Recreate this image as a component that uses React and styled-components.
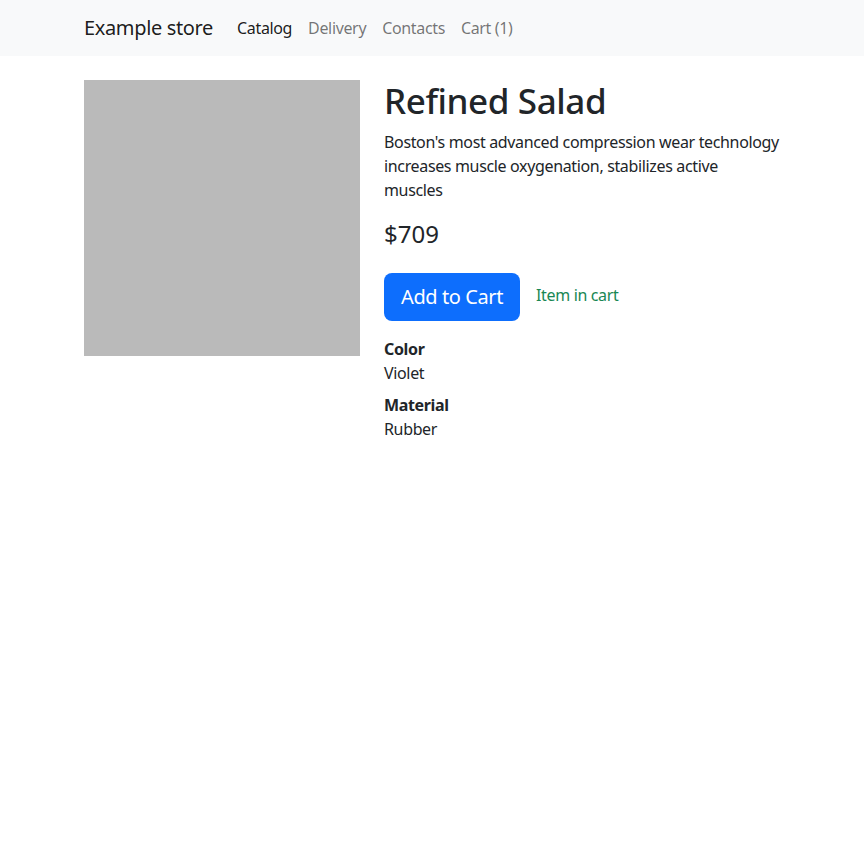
import styled, { createGlobalStyle } from "styled-components";

const GlobalStyle = createGlobalStyle`
	* {
		box-sizing: border-box;
	}

	body {
		margin: 0;
		font-family: "Noto Sans", "Open Sans", sans-serif;
		font-size: 16px;
		line-height: 1.5;
		letter-spacing: -0.35px;
		color: #212529;
		background: #ffffff;
	}
`;

const links = [
	{ label: "Catalog", active: true },
	{ label: "Delivery" },
	{ label: "Contacts" },
	{ label: "Cart (1)" },
];

const specs = [
	{ name: "Color", value: "Violet" },
	{ name: "Material", value: "Rubber" },
];

export default function App() {
	return (
		<>
			<GlobalStyle />
			<Navbar>
				<Container>
					<Brand href="#">Example store</Brand>
					<NavList>
						{links.map((link) => (
							<NavLink key={link.label} href="#" $active={link.active}>
								{link.label}
							</NavLink>
						))}
					</NavList>
				</Container>
			</Navbar>
			<Main>
				<Product>
					<Picture />
					<Details>
						<Title>Refined Salad</Title>
						<Description>
							Boston's most advanced compression wear technology increases
							muscle oxygenation, stabilizes active muscles
						</Description>
						<Price>$709</Price>
						<Actions>
							<CartButton type="button">Add to Cart</CartButton>
							<InCart>Item in cart</InCart>
						</Actions>
						<Specs>
							{specs.map((spec) => (
								<div key={spec.name}>
									<SpecName>{spec.name}</SpecName>
									<SpecValue>{spec.value}</SpecValue>
								</div>
							))}
						</Specs>
					</Details>
				</Product>
			</Main>
		</>
	);
}

const Navbar = styled.nav`
	background: #f8f9fa;
	padding: 8px 0;
`;

const Container = styled.div`
	width: 720px;
	margin: 0 auto;
	padding: 0 12px;
	display: flex;
	align-items: center;
`;

const Brand = styled.a`
	font-size: 20px;
	line-height: 30px;
	padding: 5px 0;
	margin-right: 16px;
	color: rgba(0, 0, 0, 0.9);
	text-decoration: none;
`;

const NavList = styled.div`
	display: flex;
`;

const NavLink = styled.a`
	padding: 8px;
	font-size: 16px;
	line-height: 24px;
	text-decoration: none;
	color: ${({ $active }) => ($active ? "rgba(0, 0, 0, 0.9)" : "rgba(0, 0, 0, 0.55)")};
`;

const Main = styled(Container)`
	margin-top: 24px;
	display: block;
`;

const Product = styled.div`
	display: flex;
	gap: 24px;
	align-items: flex-start;
`;

const Picture = styled.div`
	flex: 0 0 276px;
	height: 276px;
	background: #bababa;
`;

const Details = styled.div`
	flex: 1;
	min-width: 0;
`;

const Title = styled.h1`
	margin: 0 0 8px;
	font-size: 35px;
	font-weight: 500;
	line-height: 1.2;
	letter-spacing: -0.4px;
`;

const Description = styled.p`
	margin: 0 0 16px;
`;

const Price = styled.div`
	font-size: 24px;
	line-height: 31px;
	margin-bottom: 24px;
	letter-spacing: 0;
`;

const Actions = styled.div`
	display: flex;
	align-items: center;
	gap: 16px;
	margin-bottom: 16px;
`;

const CartButton = styled.button`
	font-family: inherit;
	letter-spacing: -0.4px;
	font-size: 20px;
	line-height: 30px;
	padding: 9px 17px;
	border: none;
	border-radius: 8px;
	background: #0d6efd;
	color: #ffffff;
	cursor: pointer;
`;

const InCart = styled.span`
	color: #198754;
	margin-top: -4px;
`;

const Specs = styled.dl`
	margin: 0;
`;

const SpecName = styled.dt`
	font-weight: 700;
`;

const SpecValue = styled.dd`
	margin: 0 0 8px;
`;
